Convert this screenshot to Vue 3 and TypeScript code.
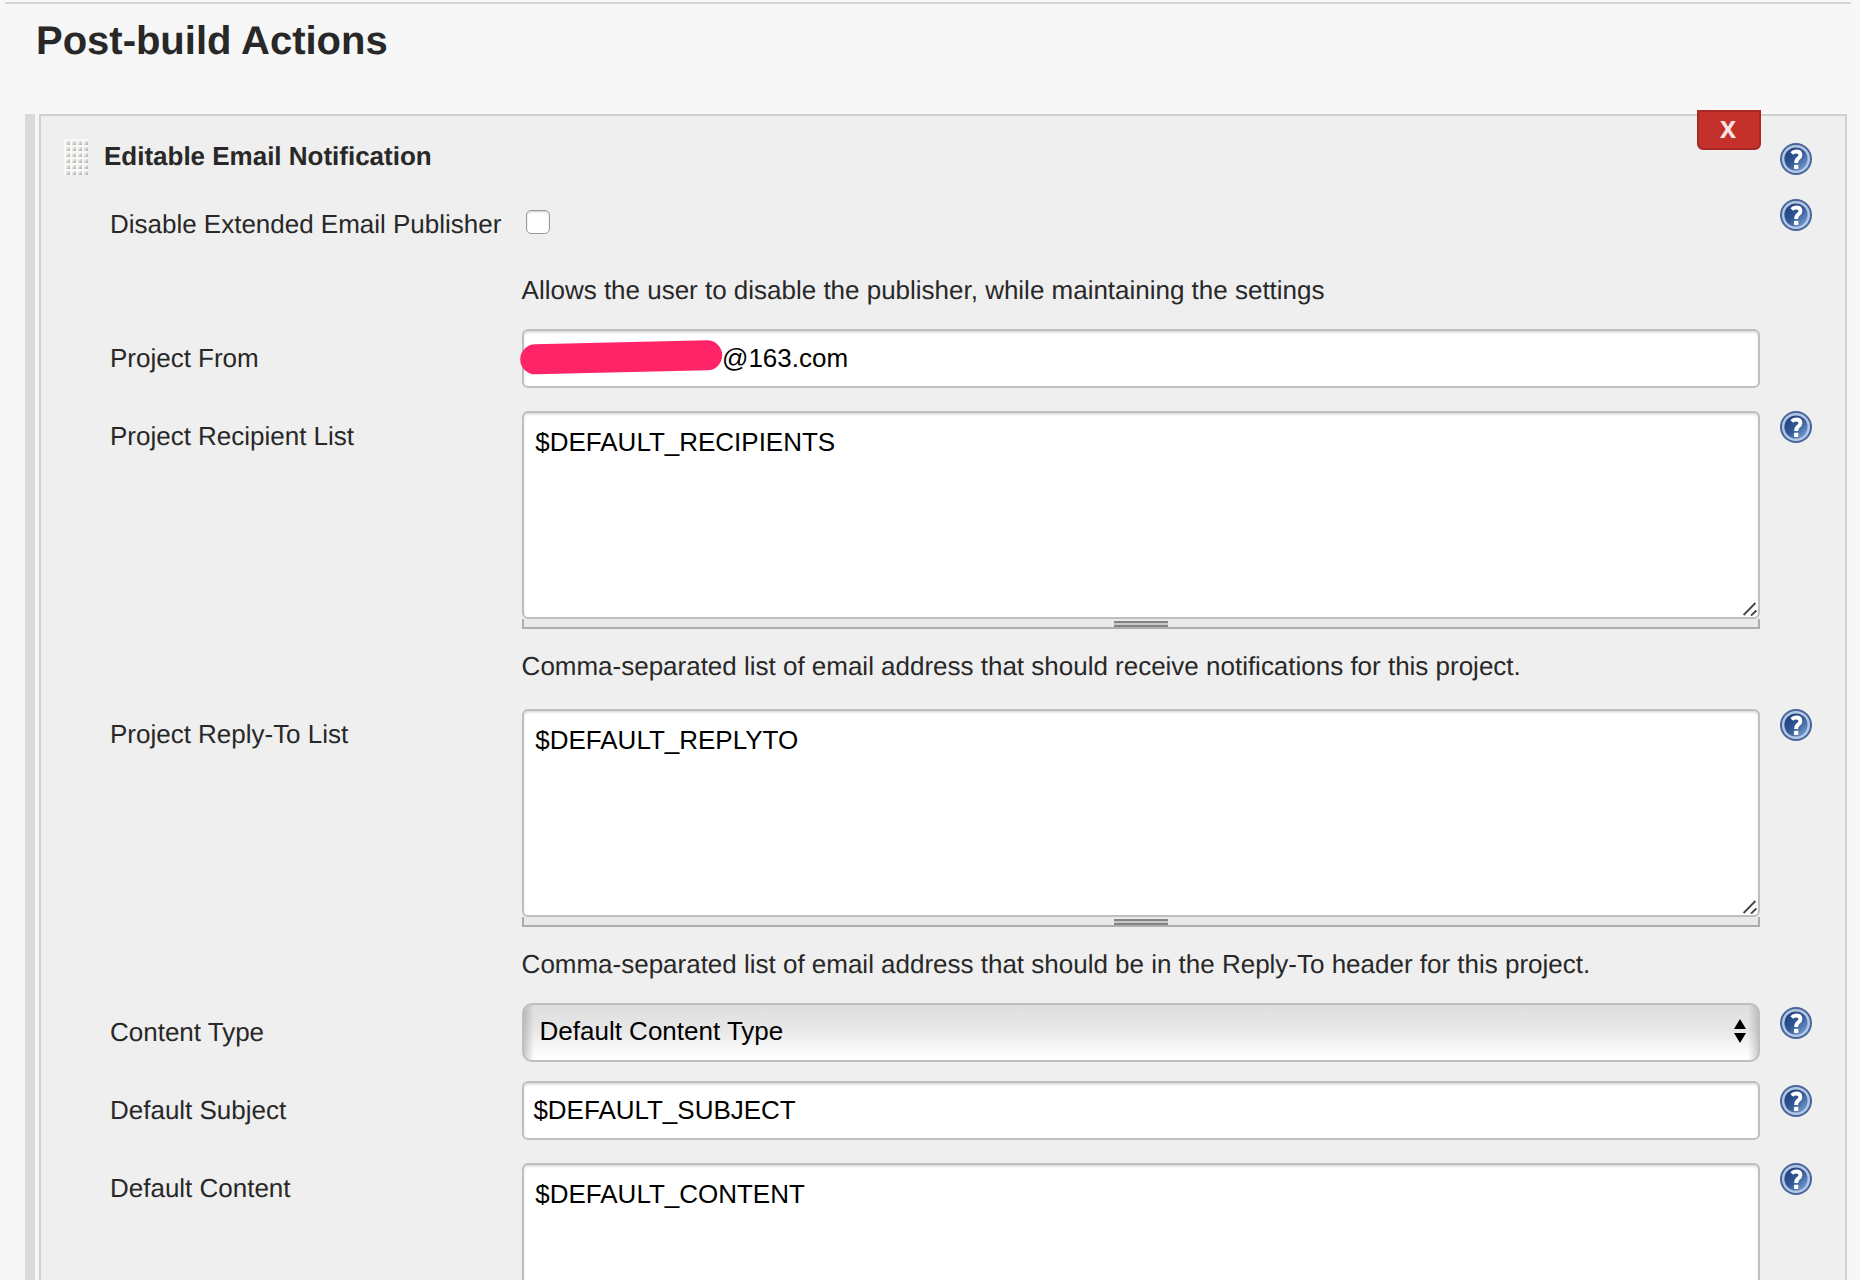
<script setup lang="ts">
import { ref } from 'vue'

const disabled = ref(false)
const from = ref('@163.com')
const recipients = ref('$DEFAULT_RECIPIENTS')
const replyTo = ref('$DEFAULT_REPLYTO')
const contentType = ref('default')
const subject = ref('$DEFAULT_SUBJECT')
const content = ref('$DEFAULT_CONTENT')
</script>

<template>
  <svg class="defs" width="0" height="0" aria-hidden="true">
    <defs>
      <linearGradient id="disc" x1="0.1" y1="0.1" x2="0.9" y2="0.9">
        <stop offset="0" stop-color="#1f3d7b" />
        <stop offset="0.5" stop-color="#335896" />
        <stop offset="1" stop-color="#7ba3d4" />
      </linearGradient>
      <symbol id="help" viewBox="0 0 32 32">
        <circle cx="16" cy="16" r="16" fill="#49659b" />
        <circle cx="16" cy="16" r="12.8" fill="url(#disc)" stroke="#b3c8e4" stroke-width="2.4" />
        <path d="M11.8 10.4Q13.4 8.5 16.2 8.5Q20.4 8.5 20.4 12Q20.4 14 18.3 15.4Q16.2 16.9 16.2 20" fill="none" stroke="#fff" stroke-width="3.9" />
        <rect x="14" y="21.8" width="4.4" height="4.2" rx="0.8" fill="#fff" />
      </symbol>
      <symbol id="resize" viewBox="0 0 14 14">
        <path d="M0.6 13L12.4 1M8 13.6L13.4 8.4" fill="none" stroke="#444" stroke-width="1.9" />
      </symbol>
    </defs>
  </svg>

  <main class="page">
    <hr class="rule" />
    <h1>Post-build Actions</h1>
    <div class="section">
      <div class="drag-bar"></div>
      <section class="panel">
        <button class="remove" type="button">X</button>
        <header class="row head">
          <div class="title">
            <span class="grip"><i v-for="n in 24" :key="n"></i></span>
            <h2>Editable Email Notification</h2>
          </div>
          <svg class="help"><use href="#help" /></svg>
        </header>

        <div class="row disable">
          <label>Disable Extended Email Publisher</label>
          <div class="control">
            <input v-model="disabled" class="check" type="checkbox" />
            <p>Allows the user to disable the publisher, while maintaining the settings</p>
          </div>
          <svg class="help"><use href="#help" /></svg>
        </div>

        <div class="row line">
          <label>Project From</label>
          <div class="control">
            <input v-model="from" class="field from" type="text" />
            <svg class="ink" viewBox="0 0 204 36"><path d="M16.2 19.3L188.2 15.3" /></svg>
          </div>
        </div>

        <div class="row area">
          <label>Project Recipient List</label>
          <div class="control">
            <textarea v-model="recipients" class="field"></textarea>
            <svg class="corner"><use href="#resize" /></svg>
            <div class="handle"><span></span></div>
            <p>Comma-separated list of email address that should receive notifications for this project.</p>
          </div>
          <svg class="help"><use href="#help" /></svg>
        </div>

        <div class="row area reply">
          <label>Project Reply-To List</label>
          <div class="control">
            <textarea v-model="replyTo" class="field"></textarea>
            <svg class="corner"><use href="#resize" /></svg>
            <div class="handle"><span></span></div>
            <p>Comma-separated list of email address that should be in the Reply-To header for this project.</p>
          </div>
          <svg class="help"><use href="#help" /></svg>
        </div>

        <div class="row line type">
          <label>Content Type</label>
          <div class="control">
            <select v-model="contentType">
              <option value="default">Default Content Type</option>
            </select>
            <svg class="arrows" viewBox="0 0 12 24"><path d="M6 0L12 10H0ZM6 24L12 14H0Z" /></svg>
          </div>
          <svg class="help"><use href="#help" /></svg>
        </div>

        <div class="row line">
          <label>Default Subject</label>
          <div class="control">
            <input v-model="subject" class="field" type="text" />
          </div>
          <svg class="help"><use href="#help" /></svg>
        </div>

        <div class="row area">
          <label>Default Content</label>
          <div class="control">
            <textarea v-model="content" class="field"></textarea>
          </div>
          <svg class="help"><use href="#help" /></svg>
        </div>
      </section>
    </div>
  </main>
</template>

<style>
html,
body {
  margin: 0;
  background: #f7f7f7;
  overflow: hidden;
}
</style>

<style scoped>
* {
  box-sizing: border-box;
}
.defs {
  position: absolute;
}
.page {
  display: flex;
  flex-direction: column;
  height: 1280px;
  overflow: hidden;
  background: #f7f7f7;
  color: #282828;
  font: 26px/30px 'Liberation Sans', Arial, sans-serif;
  letter-spacing: -0.01px;
  text-rendering: geometricPrecision;
}
.rule {
  flex: none;
  width: 1846px;
  height: 2px;
  margin: 2px 0 0 5px;
  border: 0;
  background: #d4d4d4;
}
h1 {
  flex: none;
  height: 110px;
  margin: 0;
  padding: 14px 0 0 36px;
  font-size: 40px;
  line-height: 46px;
}
.section {
  display: flex;
  flex: 1;
  gap: 4px;
  padding: 0 13px 0 25px;
}
.drag-bar {
  width: 10px;
  background: #dadada;
}
.panel {
  position: relative;
  flex: 1;
  height: 1400px;
  border: 2px solid #d0d0d0;
  background: #efefef;
}
.remove {
  position: absolute;
  top: -6px;
  right: 84px;
  width: 64px;
  height: 40px;
  padding: 0 2px 2px 0;
  border: 2px solid #a82824;
  border-radius: 0 0 6px 6px;
  background: #c4312b;
  color: #f8e4e3;
  font: bold 24px/34px 'Noto Sans', 'Open Sans', sans-serif;
}
.row {
  display: grid;
  grid-template-columns: 412px 1238px 52px;
  align-items: start;
  padding-left: 69px;
}
.help {
  width: 32px;
  height: 32px;
  margin-left: 20px;
}
.head {
  height: 83px;
  padding-left: 23px;
  grid-template-columns: 1696px 52px;
}
.head .help {
  margin-top: 27px;
}
.title {
  display: flex;
  align-items: flex-start;
  gap: 16px;
  padding-top: 23px;
}
h2 {
  margin: 2px 0 0;
  font-size: 26px;
  line-height: 30px;
}
.grip {
  display: grid;
  grid-template-columns: repeat(4, 6px);
  width: 24px;
  height: 36px;
  background: #f8f8f6;
}
.grip i {
  width: 4px;
  height: 4px;
  margin: 2px 0 0 2px;
  background: linear-gradient(135deg, #f0f0ee 20%, #a8a8a6);
}
.control {
  position: relative;
  display: flex;
  flex-direction: column;
}
p {
  margin: 0 0 0 -0.4px;
  white-space: nowrap;
}
label {
  white-space: nowrap;
}
.disable {
  height: 130px;
}
.disable label {
  padding-top: 10px;
}
.check {
  appearance: none;
  width: 24px;
  height: 24px;
  margin: 11px 0 41px 4px;
  border: 1px solid #9a9a9a;
  border-radius: 5px;
  background: #fff;
  box-shadow: inset 0 1px 2px #ccc;
}
.line {
  height: 82px;
}
.line label {
  padding-top: 14px;
}
.line .help {
  margin-top: 4px;
}
.field {
  display: block;
  width: 100%;
  height: 59px;
  margin: 0;
  padding: 0 9.4px;
  border: 2px solid #bfbfbf;
  border-radius: 6px;
  outline: 0;
  background: #fff;
  box-shadow: inset 0 2px 3px -1px #ccc;
  color: #000;
  font: inherit;
  letter-spacing: inherit;
  resize: none;
}
.from {
  padding-left: 198px;
}
.ink {
  position: absolute;
  top: 11px;
  left: -3px;
  width: 204px;
  height: 36px;
}
.ink path {
  fill: none;
  stroke: #ff2468;
  stroke-width: 30;
  stroke-linecap: round;
}
.area {
  height: 298px;
}
.area label {
  padding-top: 10px;
}
textarea.field {
  height: 208px;
  padding: 14px 11.3px;
  overflow: hidden;
}
.corner {
  position: absolute;
  top: 191px;
  right: 3px;
  width: 14px;
  height: 14px;
}
.handle {
  display: flex;
  justify-content: center;
  height: 10px;
  margin-bottom: 22px;
  border: solid #adadab;
  border-width: 0 2px 2px;
  background: #e9e9e8;
}
.handle span {
  width: 54px;
  height: 6px;
  margin-top: 2px;
  border: solid #848484;
  border-width: 2px 0;
  background: #c8c8c8;
}
.reply {
  height: 294px;
}
.type {
  height: 78px;
}
select {
  appearance: none;
  height: 59px;
  padding: 0 16px 4px 15.5px;
  border: 2px solid #bfbfbf;
  border-radius: 10px;
  background:
    linear-gradient(90deg, rgba(150, 150, 150, 0.5), transparent 10px, transparent calc(100% - 10px), rgba(150, 150, 150, 0.45)),
    linear-gradient(#dedede, #e7e7e7 45%, #fff 95%);
  color: #000;
  font: inherit;
}
.arrows {
  position: absolute;
  top: 16px;
  right: 14px;
  width: 12px;
  height: 24px;
}
</style>
